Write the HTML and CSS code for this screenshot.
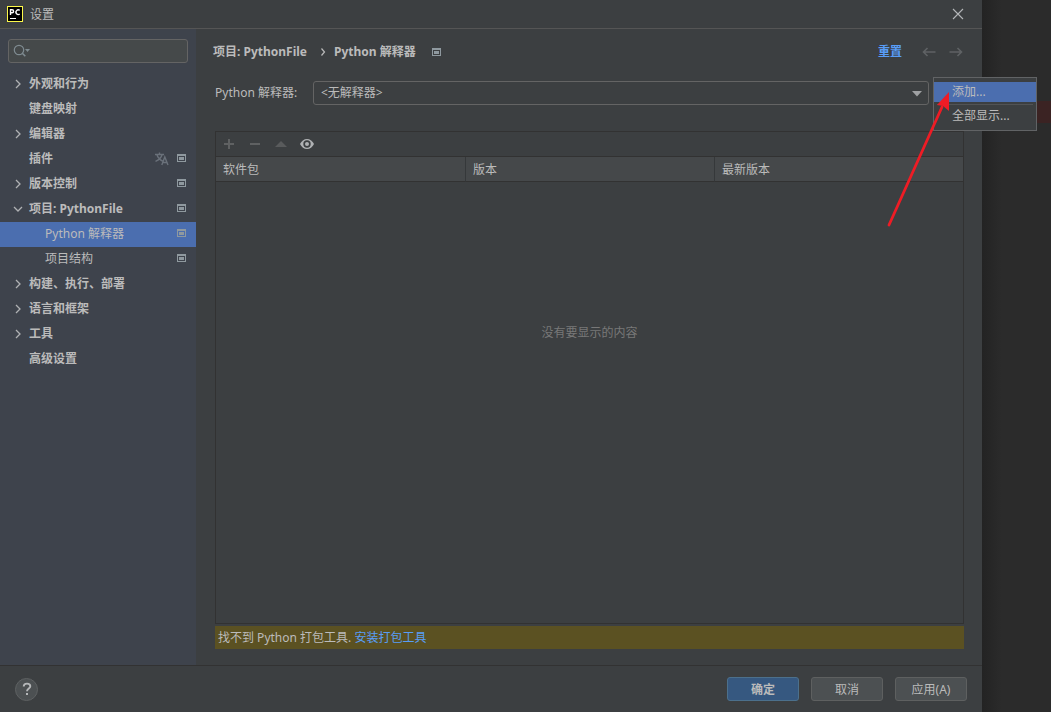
FILE: index.html
```html
<!DOCTYPE html>
<html lang="zh-CN">
<head>
<meta charset="utf-8">
<title>设置</title>
<link rel="stylesheet" href="styles.css">
</head>
<body>
<svg class="defs" aria-hidden="true">
  <symbol id="chev-right" viewBox="0 0 10 10"><path d="M3 1l4 4-4 4" fill="none" stroke="#afb1b3" stroke-width="1.3"/></symbol>
  <symbol id="chev-down" viewBox="0 0 10 10"><path d="M1 3l4 4 4-4" fill="none" stroke="#afb1b3" stroke-width="1.3"/></symbol>
  <symbol id="panel" viewBox="0 0 9 8"><path d="M0 0h9v8H0zM1 2v5h7V2z" fill="currentColor" fill-rule="evenodd"/><path d="M2 3h5v3H2z" fill="currentColor"/></symbol>
</svg>
<div class="screen">
  <div class="dialog">
    <header class="titlebar">
      <svg class="logo" viewBox="0 0 16 16"><rect x=".5" y=".5" width="15" height="15" fill="#000" stroke="#fcf84a"/><path d="M3.5 9V3.7h1.6a1.5 1.5 0 010 3H3.5M12.7 4.4a2.3 2.3 0 10 0 3.6" fill="none" stroke="#fff" stroke-width="1.4"/><path d="M3 12h6v1H3z" fill="#fff"/></svg>
      <h1 class="title">设置</h1>
      <button class="plain close" aria-label="关闭"><svg viewBox="0 0 12 12"><path d="M1 1l10 10M11 1L1 11" stroke="#b4b6b8" stroke-width="1.1"/></svg></button>
    </header>
    <div class="body">
      <nav class="sidebar" aria-label="设置">
        <label class="search">
          <svg viewBox="0 0 18 14"><circle cx="6" cy="6" r="4.7" fill="none" stroke="#7f8b91" stroke-width="1.2"/><path d="M9.3 9.3l3 3" stroke="#7f8b91" stroke-width="1.6"/><path d="M12 5h5l-2.500 3z" fill="#7f8b91"/></svg>
          <input type="text" aria-label="搜索">
        </label>
        <ul class="tree">
          <li class="item"><svg class="chev"><use href="#chev-right"/></svg><span class="name">外观和行为</span></li>
          <li class="item"><span class="chev"></span><span class="name">键盘映射</span></li>
          <li class="item"><svg class="chev"><use href="#chev-right"/></svg><span class="name">编辑器</span></li>
          <li class="item"><span class="chev"></span><span class="name">插件</span><svg class="lang" viewBox="0 0 14 14"><path d="M0 2.500h9M4.500 .5v2M2 2.800c.8 3 3 5 5.500 6.200M7 2.800C6.300 5.500 4 8 .5 9.300M6.800 13l3-8 3.200 8M7.800 10.500h4.500" fill="none" stroke="#6a717a" stroke-width="1.4"/></svg><svg class="panel"><use href="#panel"/></svg></li>
          <li class="item"><svg class="chev"><use href="#chev-right"/></svg><span class="name">版本控制</span><svg class="panel"><use href="#panel"/></svg></li>
          <li class="item"><svg class="chev"><use href="#chev-down"/></svg><span class="name">项目: PythonFile</span><svg class="panel"><use href="#panel"/></svg></li>
          <li class="item child selected"><span class="name">Python 解释器</span><svg class="panel"><use href="#panel"/></svg></li>
          <li class="item child"><span class="name">项目结构</span><svg class="panel"><use href="#panel"/></svg></li>
          <li class="item"><svg class="chev"><use href="#chev-right"/></svg><span class="name">构建、执行、部署</span></li>
          <li class="item"><svg class="chev"><use href="#chev-right"/></svg><span class="name">语言和框架</span></li>
          <li class="item"><svg class="chev"><use href="#chev-right"/></svg><span class="name">工具</span></li>
          <li class="item"><span class="chev"></span><span class="name">高级设置</span></li>
        </ul>
      </nav>
      <main class="content">
        <div class="crumbs">
          <span>项目: PythonFile</span>
          <svg class="sep" viewBox="0 0 6 8"><path d="M1.500 .5L4.500 4l-3 3.500" fill="none" stroke="#bbb" stroke-width="1.2"/></svg>
          <span>Python 解释器</span>
          <svg class="panel crumb-panel"><use href="#panel"/></svg>
          <a class="reset" href="#">重置</a>
          <button class="plain nav" aria-label="后退"><svg viewBox="0 0 14 10"><path d="M13.500 5H1.500M5.500 1l-4 4 4 4" fill="none" stroke="#5f6264" stroke-width="1.6"/></svg></button>
          <button class="plain nav" aria-label="前进"><svg viewBox="0 0 14 10"><path d="M.5 5h12M8.500 1l4 4-4 4" fill="none" stroke="#5f6264" stroke-width="1.6"/></svg></button>
        </div>
        <div class="interpreter">
          <label for="interp">Python 解释器:</label>
          <div class="combo">
            <select id="interp"><option>&lt;无解释器&gt;</option></select>
            <svg class="caret" viewBox="0 0 10 6"><path d="M0 0h10L5 5.500z" fill="#9fa1a3"/></svg>
            <div class="popup">
              <button class="menu-item active">添加...</button>
              <hr class="rule">
              <button class="menu-item">全部显示...</button>
            </div>
            <svg class="pointer" viewBox="0 0 70 140"><path d="M4 135L57 17" stroke="#ee1c25" stroke-width="2.800" stroke-linecap="round"/><path d="M64 2L52 15l6 1 6 5z" fill="#ee1c25"/></svg>
          </div>
        </div>
        <section class="packages">
          <div class="toolbar">
            <button class="plain tool" aria-label="添加"><svg viewBox="0 0 14 14"><path d="M7 2v10M2 7h10" stroke="#5f6162" stroke-width="2"/></svg></button>
            <button class="plain tool" aria-label="移除"><svg viewBox="0 0 14 14"><path d="M2 7h10" stroke="#5f6162" stroke-width="2"/></svg></button>
            <button class="plain tool" aria-label="升级"><svg viewBox="0 0 14 14"><path d="M1 10l6-6 6 6z" fill="#595b5c"/></svg></button>
            <button class="plain tool" aria-label="显示早期版本"><svg viewBox="0 0 14 14"><path d="M0 7c1.500-3 4-5 7-5s5.500 2 7 5c-1.500 3-4 5-7 5S1.500 10 0 7z" fill="#afb1b3"/><circle cx="7" cy="7" r="3.700" fill="#3c3f41"/><circle cx="7" cy="7" r="2" fill="#afb1b3"/></svg></button>
          </div>
          <table class="grid">
            <thead><tr><th scope="col">软件包</th><th scope="col">版本</th><th scope="col">最新版本</th></tr></thead>
          </table>
          <p class="empty">没有要显示的内容</p>
        </section>
        <p class="notice">找不到 Python 打包工具. <a href="#">安装打包工具</a></p>
      </main>
    </div>
    <footer class="footer">
      <button class="help" aria-label="帮助"><svg viewBox="0 0 10 14"><path d="M1.700 4.500C1.700 2.700 3 1.600 5 1.600s3.300 1.100 3.300 2.700C8.300 6.500 5 6.600 5 9.300" fill="none" stroke="#b5b7b9" stroke-width="1.900"/><path d="M4 11h2v2H4z" fill="#b5b7b9"/></svg></button>
      <button class="btn primary">确定</button>
      <button class="btn">取消</button>
      <button class="btn">应用(A)</button>
    </footer>
  </div>
  <aside class="backdrop"><div class="mark"></div></aside>
</div>
</body>
</html>
```
FILE: styles.css
```css
* { box-sizing: border-box; }
body, h1, p, ul { margin: 0; padding: 0; }
body, button, input, select {
  font: 12px/16px "Noto Sans", "Noto Sans CJK SC", sans-serif;
  color: #bbbbbb;
}
body { background: #2b2b2b; overflow: hidden; }
.defs { position: absolute; width: 0; height: 0; }
svg { display: block; flex: none; }
a { color: #589df6; text-decoration: none; }
.plain { padding: 0; border: 0; background: none; }

.screen { display: flex; height: 100vh; }
.dialog { flex: 1; min-width: 0; display: flex; flex-direction: column; background: #3c3f41; }
.backdrop { width: 69px; padding-top: 101px; background: linear-gradient(90deg, #232323, #2b2b2b 20px); }
.mark { height: 22px; margin-left: 54px; background: #3b2323; }

.titlebar { display: flex; align-items: center; height: 29px; padding: 0 18px 0 7px; border-bottom: 1px solid #555555; }
.logo { width: 16px; height: 16px; }
.title { flex: 1; margin-left: 7px; padding-top: 2px; font-size: 12px; font-weight: 400; }
.close svg { width: 12px; height: 12px; }

.body { flex: 1; min-height: 0; display: flex; }
.sidebar { width: 196px; padding-top: 10px; background: #3e434c; }
.search { display: flex; align-items: center; height: 24px; margin: 0 8px; padding-left: 4px; border: 1px solid #646464; border-radius: 3px; background: #45494a; }
.search svg { width: 18px; height: 14px; }
.search input { flex: 1; min-width: 0; padding: 0 4px; border: 0; outline: 0; background: none; }
.tree { margin-top: 9px; list-style: none; }
.item { display: flex; align-items: center; height: 25px; padding: 0 10px 2px 13px; font-weight: 700; }
.chev { width: 10px; height: 10px; margin-right: 6px; }
.name { flex: 1; }
.child { padding-left: 45px; font-weight: 400; }
.selected { background: #4b6eaf; }
.panel { width: 9px; height: 8px; margin-bottom: 1px; color: #8f999f; }
.lang { width: 14px; height: 14px; margin-right: 8px; }

.content { flex: 1; min-width: 0; display: flex; flex-direction: column; padding: 12px 18px 16px 19px; }
.crumbs { display: flex; align-items: center; height: 22px; margin-left: -2px; font-weight: 700; }
.sep { width: 6px; height: 8px; margin: 0 8px 0 13px; }
.crumb-panel { margin: 0 0 0 16px; }
.reset { margin-left: auto; margin-right: 7px; }
.nav { margin-left: 13px; }
.nav:last-child { margin-right: 1px; }
.nav svg { width: 14px; height: 10px; }
.interpreter { display: flex; align-items: center; margin: 18px 35px 0 0; }
.interpreter label { width: 98px; }
.combo { position: relative; flex: 1; }
.combo select { display: block; width: 100%; height: 24px; padding: 0 7px; border: 1px solid #646464; border-radius: 3px; background: #3c3f41; appearance: none; }
.caret { position: absolute; right: 7px; top: 10px; width: 10px; height: 6px; }
.popup { position: absolute; left: 100%; top: -4px; width: 104px; margin-left: 4px; padding: 4px 0; border: 1px solid #616365; background: #3c3f41; }
.menu-item { display: block; width: 100%; height: 20px; padding: 0 0 0 18px; border: 0; background: none; text-align: left; }
.menu-item.active { background: #4b6eaf; }
.rule { height: 1px; margin: 2px 3px 1px; border: 0; background: #515355; }
.pointer { position: absolute; right: -26px; top: 9px; width: 70px; height: 140px; pointer-events: none; }

.packages { flex: 1; min-height: 0; margin-top: 26px; border: 1px solid #323232; }
.toolbar { display: flex; align-items: center; gap: 12px; height: 25px; padding-left: 6px; border-bottom: 1px solid #323232; }
.tool svg { width: 14px; height: 14px; }
.grid { width: 100%; table-layout: fixed; border-spacing: 0; }
.grid th { height: 25px; padding: 1px 7px 0; border-bottom: 1px solid #323232; background: #45484a; font-weight: 400; text-align: left; }
.grid th + th { border-left: 1px solid #35383a; }
.empty { margin-top: 143px; color: #787878; text-align: center; }
.notice { height: 23px; margin-top: 2px; padding-left: 3px; background: #5b5122; line-height: 23px; }

.footer { display: flex; align-items: center; gap: 12px; height: 47px; padding: 0 15px; border-top: 1px solid #323232; }
.help { display: grid; place-items: center; width: 23px; height: 23px; margin-right: auto; padding: 0; border: 1px solid #5e6162; border-radius: 50%; background: #4c5052; }
.help svg { width: 10px; height: 14px; }
.btn { width: 72px; height: 24px; padding: 1px 0 0; border: 1px solid #5e6060; border-radius: 3px; background: #4c5052; }
.btn.primary { border-color: #4c708c; background: #365880; font-weight: 600; }
```
